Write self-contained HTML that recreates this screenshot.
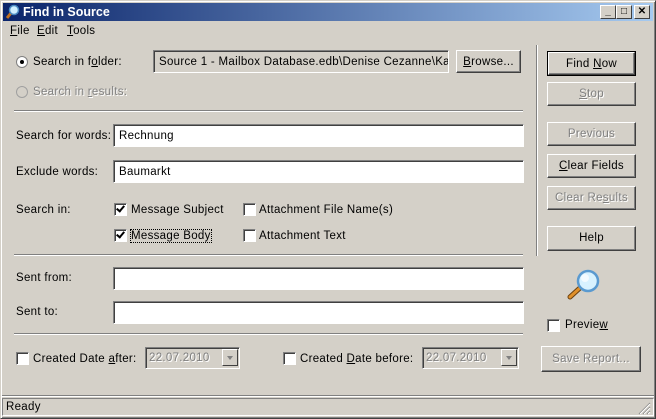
<!DOCTYPE html>
<html><head><style>
*{box-sizing:border-box;margin:0;padding:0}
body{width:656px;height:419px;background:#d4d0c8;font-family:"Liberation Sans",sans-serif;font-size:11.5px;letter-spacing:0.3px;color:#000;position:relative;overflow:hidden}
.a{position:absolute;white-space:nowrap}
.win{position:absolute;left:0;top:0;width:656px;height:419px;border:1px solid;border-color:#d4d0c8 #404040 #404040 #d4d0c8;box-shadow:inset 1px 1px #fff,inset -1px -1px #808080}
.title{position:absolute;left:3px;top:3px;width:650px;height:18px;background:linear-gradient(to right,#0a246a,#a6caf0);color:#fff;font-weight:bold;font-size:12.5px;letter-spacing:0;line-height:19px;padding-left:20px}
.tb{position:absolute;top:5px;width:16px;height:14px;background:#d4d0c8;border:1px solid;border-color:#fff #404040 #404040 #fff;font-size:10px;font-weight:bold;text-align:center;line-height:12px;color:#000;letter-spacing:0}
.btn{position:absolute;background:#d4d0c8;border:1px solid;border-color:#fff #404040 #404040 #fff;box-shadow:inset -1px -1px #808080;text-align:center;line-height:23px}
.dis{color:#808080;text-shadow:1px 1px #fff}
.def{outline:1px solid #000}
.in{position:absolute;background:#fff;border:1px solid;border-color:#808080 #fff #fff #808080;box-shadow:inset 1px 1px #404040;padding-left:5px;line-height:22px;white-space:nowrap;overflow:hidden}
.g{background:#d4d0c8}
.cb{position:absolute;width:13px;height:13px;background:#fff;border:1px solid;border-color:#808080 #fff #fff #808080;box-shadow:inset 1px 1px #404040}
.hr{position:absolute;height:2px;border-top:1px solid #808080;border-bottom:1px solid #fff}
.vr{position:absolute;width:2px;border-left:1px solid #808080;border-right:1px solid #fff}
u{text-decoration:underline}
.chk::after{content:"";position:absolute;left:3px;top:0px;width:3px;height:6px;border:solid #000;border-width:0 2px 2px 0;transform:rotate(40deg)}
.dd{position:absolute;right:1px;top:1px;width:16px;height:17px;background:#d4d0c8;border:1px solid;border-color:#fff #404040 #404040 #fff}
.dd::after{content:"";position:absolute;left:4px;top:6px;border:3px solid transparent;border-top:4px solid #808080}
</style></head><body>
<div class="win"></div>
<div class="title">Find in Source</div>
<svg class="a" style="left:4px;top:4px" width="16" height="16"><line x1="3" y1="14" x2="7" y2="9" stroke="#c07020" stroke-width="3"/><circle cx="10" cy="6" r="4.5" fill="#cfefff" stroke="#4a8ac0" stroke-width="1.5"/></svg>
<div class="tb" style="left:600px">_</div><div class="tb" style="left:616px">□</div><div class="tb" style="left:634px">✕</div>
<div class="a" style="left:10px;top:25px"><u>F</u>ile</div>
<div class="a" style="left:37px;top:25px"><u>E</u>dit</div>
<div class="a" style="left:67px;top:25px"><u>T</u>ools</div>

<div class="a" style="left:16px;top:56px;width:12px;height:12px;border-radius:50%;background:#fff;border:1px solid #808080"><div style="position:absolute;left:3px;top:3px;width:4px;height:4px;border-radius:50%;background:#000"></div></div>
<div class="a" style="left:33px;top:56px">Search in f<u>o</u>lder:</div>
<div class="in g" style="left:153px;top:50px;width:296px;height:23px">Source 1 - Mailbox Database.edb\Denise Cezanne\Ka</div>
<div class="btn" style="left:456px;top:50px;width:65px;height:23px"><u>B</u>rowse...</div>
<div class="a" style="left:16px;top:86px;width:12px;height:12px;border-radius:50%;border:1px solid #a0a0a0"></div>
<div class="a dis" style="left:33px;top:86px">Search in <u>r</u>esults:</div>
<div class="hr" style="left:14px;top:110px;width:509px"></div>

<div class="a" style="left:16px;top:130px">Search for words:</div>
<div class="in" style="left:113px;top:124px;width:411px;height:23px">Rechnung</div>
<div class="a" style="left:16px;top:166px">Exclude words:</div>
<div class="in" style="left:113px;top:160px;width:411px;height:23px">Baumarkt</div>

<div class="a" style="left:16px;top:204px">Search in:</div>
<div class="cb chk" style="left:114px;top:203px"></div><div class="a" style="left:131px;top:204px">Message Subject</div>
<div class="cb" style="left:243px;top:203px"></div><div class="a" style="left:259px;top:204px">Attachment File Name(s)</div>
<div class="cb chk" style="left:114px;top:229px"></div><div class="a" style="left:131px;top:230px;outline:1px dotted #000">Message Body</div>
<div class="cb" style="left:243px;top:229px"></div><div class="a" style="left:259px;top:230px">Attachment Text</div>
<div class="hr" style="left:14px;top:254px;width:509px"></div>

<div class="a" style="left:16px;top:272px">Sent from:</div>
<div class="in" style="left:113px;top:267px;width:411px;height:23px"></div>
<div class="a" style="left:16px;top:306px">Sent to:</div>
<div class="in" style="left:113px;top:301px;width:411px;height:23px"></div>
<div class="hr" style="left:14px;top:333px;width:509px"></div>

<div class="cb" style="left:16px;top:352px"></div><div class="a" style="left:33px;top:353px">Created Date <u>a</u>fter:</div>
<div class="in g dis" style="left:145px;top:347px;width:95px;height:22px;line-height:20px;padding-left:3px">22.07.2010<div class="dd"></div></div>
<div class="cb" style="left:283px;top:352px"></div><div class="a" style="left:300px;top:353px">Created <u>D</u>ate before:</div>
<div class="in g dis" style="left:422px;top:347px;width:97px;height:22px;line-height:20px;padding-left:3px">22.07.2010<div class="dd"></div></div>

<div class="vr" style="left:536px;top:45px;height:211px"></div>
<div class="btn def" style="left:548px;top:52px;width:87px;height:23px">Find <u>N</u>ow</div>
<div class="btn dis" style="left:547px;top:82px;width:89px;height:24px"><u>S</u>top</div>
<div class="btn dis" style="left:547px;top:122px;width:89px;height:24px">Previous</div>
<div class="btn" style="left:547px;top:154px;width:89px;height:24px"><u>C</u>lear Fields</div>
<div class="btn dis" style="left:547px;top:186px;width:89px;height:24px">Clear Re<u>s</u>ults</div>
<div class="btn" style="left:547px;top:226px;width:89px;height:25px">Help</div>
<svg class="a" style="left:562px;top:264px" width="40" height="40"><line x1="8" y1="33" x2="19" y2="23" stroke="#6a4010" stroke-width="5" stroke-linecap="round"/><line x1="8" y1="33" x2="19" y2="23" stroke="#e0902a" stroke-width="3" stroke-linecap="round"/><circle cx="26" cy="17" r="10" fill="#d8f2ff" stroke="#5a9ad0" stroke-width="2.5"/><circle cx="23" cy="14" r="4" fill="#fff" opacity=".7"/></svg>
<div class="cb" style="left:547px;top:319px"></div><div class="a" style="left:565px;top:319px">Previe<u>w</u></div>
<div class="btn dis" style="left:541px;top:346px;width:100px;height:26px;line-height:24px">Save Report...</div>

<div class="hr" style="left:2px;top:395px;width:652px"></div>
<div class="a" style="left:2px;top:398px;width:652px;height:18px;border:1px solid;border-color:#808080 #fff #fff #808080;padding-left:3px;line-height:16px">Ready</div>
<svg class="a" style="left:638px;top:402px" width="13" height="13"><path d="M12 1L1 12M12 5L5 12M12 9L9 12" stroke="#808080" stroke-width="1"/><path d="M12 2L2 12M12 6L6 12M12 10L10 12" stroke="#fff" stroke-width="1"/></svg>
</body></html>
